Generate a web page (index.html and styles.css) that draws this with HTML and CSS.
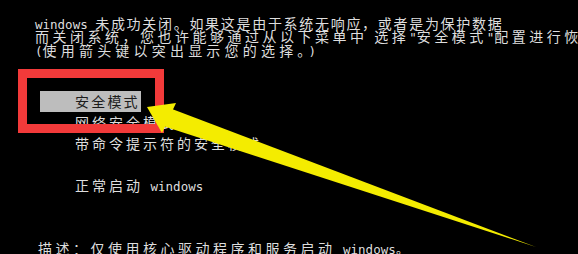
FILE: index.html
```html
<!DOCTYPE html>
<html lang="zh-CN">
<head>
    <meta charset="UTF-8">
    <meta name="viewport" content="width=device-width, initial-scale=1.0">
    <title>高级启动选项</title>
    <link rel="stylesheet" href="styles.css">
</head>
<body>

    <div class="screen">
        <div class="intro">
            <div class="line"><span class="lat">windows </span>未成功关闭。如果这是由于系统无响应，或者是为保护数据</div>
            <div class="line wide">而关闭系统，您也许能够通过从以下菜单中 选择<span class="lat">"</span>安全模式<span class="lat">"</span>配置进行恢复</div>
            <div class="line wider"><span class="lat">(</span>使用箭头键以突出显示您的选择。<span class="lat">)</span></div>
        </div>

        <ul class="menu">
            <li class="selected">安全模式</li>
            <li>网络安全模式</li>
            <li>带命令提示符的安全模式</li>
            <li class="blank"></li>
            <li>正常启动<span class="lat"> windows</span></li>
        </ul>

        <p class="desc">描述：仅使用核心驱动程序和服务启动<span class="lat"> windows。</span></p>

        <!-- annotation: red frame + yellow arrow -->
        <div class="mark"></div>
        <svg class="arrow" viewBox="0 0 578 254" width="578" height="254">
            <polygon points="147,107 176,103 162,133" fill="#f4ec00"/>
            <polygon points="172,109 536,247 163,126" fill="#f4ec00"/>
        </svg>
    </div>

</body>
</html>
```

FILE: styles.css
```css
body {
    margin: 0;
    background-color: #000;
}
.screen {
    position: relative;
    width: 578px;
    height: 254px;
    box-sizing: border-box;
    padding: 17px 0 0 35px;
    overflow: hidden;
    white-space: nowrap;
    color: #dedede;
    font-family: "Noto Sans CJK SC", sans-serif;
    font-size: 14px;
    letter-spacing: 1.7px;
}
.lat {
    font-family: "DejaVu Sans Mono", monospace;
    font-size: 12.5px;
    letter-spacing: 0;
}
.intro .line {
    height: 13.4px;
    line-height: 13.4px;
}
.intro .wide {
    letter-spacing: 3.5px;
}
.intro .wider {
    letter-spacing: 4.2px;
}
.intro .wide .lat,
.intro .wider .lat {
    letter-spacing: 0;
}
.menu {
    list-style: none;
    margin: 34.3px 0 0 5px;
    padding: 0;
    letter-spacing: 3px;
}
.menu li {
    width: fit-content;
    height: 21px;
    line-height: 21px;
    padding: 0 1px 0 35px;
}
.menu li.selected {
    letter-spacing: 2.2px;
    background-color: #bdbdbd;
    color: #1c1c1c;
}
.menu .lat {
    letter-spacing: 0;
}
.desc {
    margin: 42px 0 0 3px;
    line-height: 21px;
    letter-spacing: 3.5px;
}
.desc .lat {
    letter-spacing: 0;
}
.mark {
    position: absolute;
    left: 18px;
    top: 69px;
    width: 146px;
    height: 64px;
    box-sizing: border-box;
    border: 9px solid #f23a3a;
}
.arrow {
    position: absolute;
    left: 0;
    top: 0;
}
```
